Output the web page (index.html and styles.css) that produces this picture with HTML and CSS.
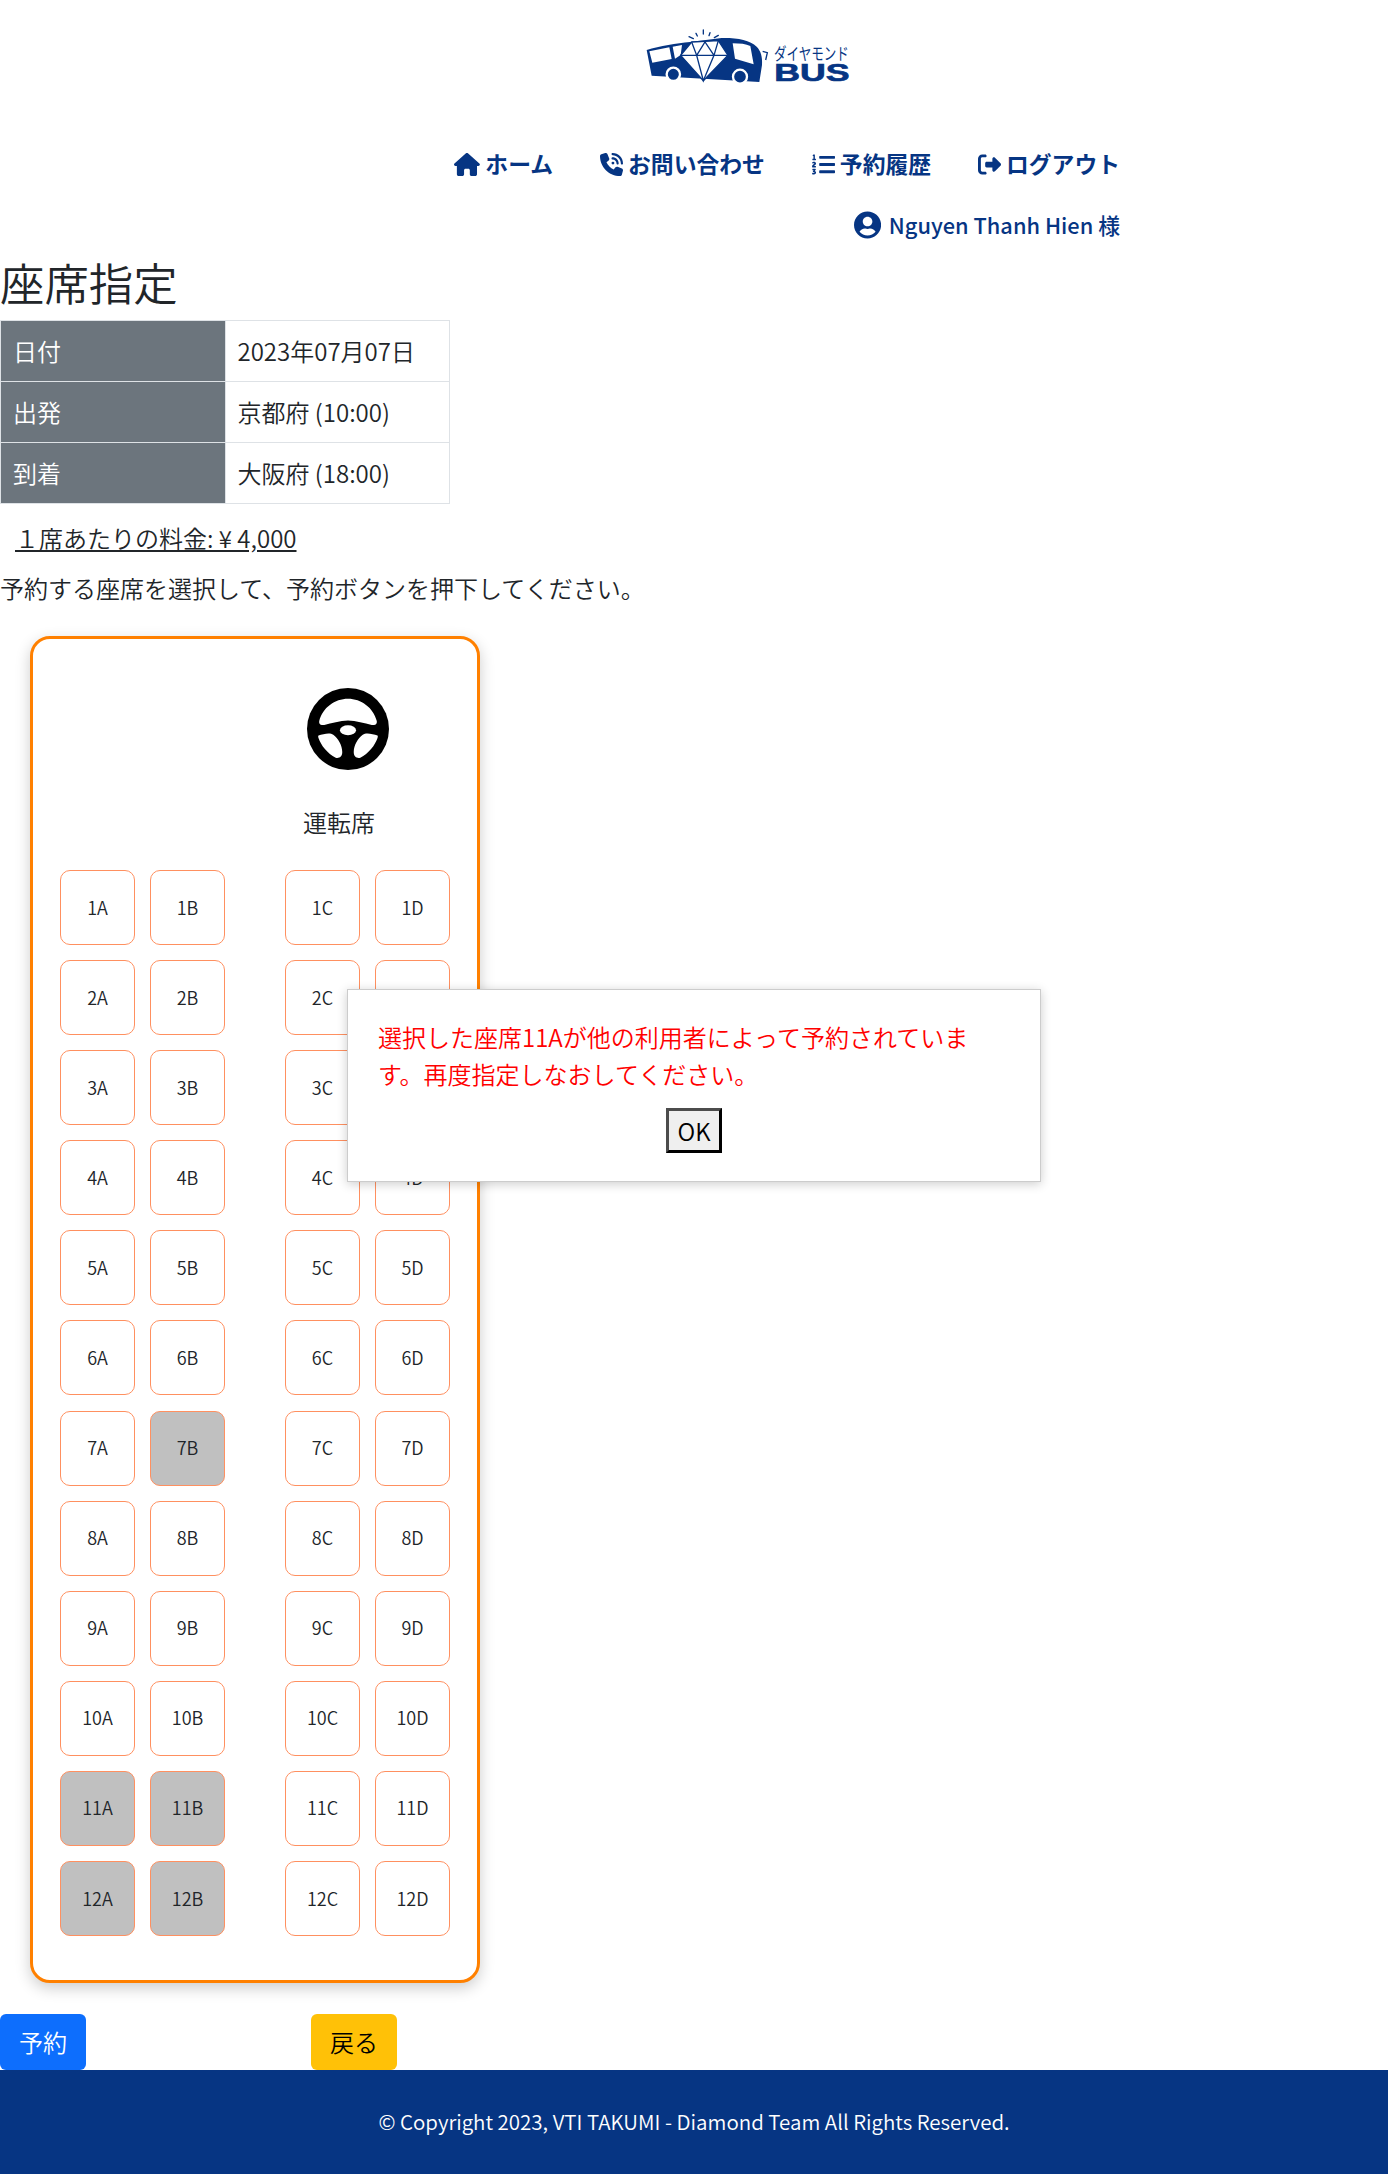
FILE: index.html
```html
<!DOCTYPE html>
<html lang="ja">
<head>
  <meta charset="UTF-8" />
  <meta name="viewport" content="width=device-width, initial-scale=1.0"/>
  <title>座席指定</title>
  <link rel="stylesheet" href="styles.css">
</head>
<body>
  <header class="site-header">
    <a class="logo" href="#">
      <svg width="220" height="80" viewBox="0 0 660 240">
        <g stroke="#063583" stroke-width="4" stroke-linecap="round">
          <path d="M147 50L160 56M168 40L172 48M190 30V42M210 38L207 47M235 46L223 53"/>
        </g>
        <path fill="#063583" d="M20 90C60 78 110 70 150 66L245 54C290 53 330 60 350 80C362 92 368 110 366 135L358 186L320 184L35 167Z"/>
        <path fill="none" stroke="#063583" stroke-width="4" d="M368 94L382 98L377 120"/>
        <path fill="#fff" d="M28 94L88 82L95 117L37 128ZM98 80L126 75L122 105L105 116ZM278 70C300 70 318 72 331 78L341 133L285 116Z"/>
        <path fill="#fff" stroke="#063583" stroke-width="4" d="M155 66L235 62L264 106L190 182L122 106Z"/>
        <path fill="none" stroke="#063583" stroke-width="4" d="M122 106H264M155 66L170 106L190 182L222 106L235 62M170 106L195 66L222 106"/>
        <g fill="#063583" stroke="#fff" stroke-width="7">
          <circle cx="100" cy="163" r="20"/>
          <circle cx="300" cy="170" r="21"/>
        </g>
        <text class="logo-kana" transform="translate(402 121) scale(1 1.35)">ダイヤモンド</text>
        <text class="logo-bus" x="403" y="184" textLength="226" lengthAdjust="spacingAndGlyphs">BUS</text>
      </svg>
    </a>
    <nav class="nav">
      <a href="#">
        <svg class="icon" viewBox="0 0 576 512"><path d="M575.8 255.5c0 18-15 32.1-32 32.1h-32l.7 160.2c0 2.7-.2 5.4-.5 8.1V472c0 22.1-17.9 40-40 40H456c-1.1 0-2.2 0-3.3-.1c-1.4 .1-2.8 .1-4.2 .1H416 392c-22.1 0-40-17.9-40-40V448 384c0-17.7-14.3-32-32-32H256c-17.7 0-32 14.3-32 32v64 24c0 22.1-17.9 40-40 40H160 128.1c-1.5 0-3-.1-4.5-.2c-1.2 .1-2.4 .2-3.6 .2H104c-22.1 0-40-17.9-40-40V360c0-.9 0-1.9 .1-2.8V287.6H32c-18 0-32-14-32-32.1c0-9 3-17 10-24L266.4 8c7-7 15-8 22-8s15 2 21 7L564.8 231.5c8 7 12 15 11 24z"/></svg>ホーム
      </a>
      <a href="#">
        <svg class="icon" viewBox="0 0 512 512"><path d="M280 0C408.1 0 512 103.9 512 232c0 13.3-10.7 24-24 24s-24-10.7-24-24c0-101.6-82.4-184-184-184c-13.3 0-24-10.7-24-24s10.7-24 24-24zm8 192a32 32 0 1 1 0 64 32 32 0 1 1 0-64zm-32-72c0-13.3 10.7-24 24-24c75.1 0 136 60.9 136 136c0 13.3-10.7 24-24 24s-24-10.7-24-24c0-48.6-39.4-88-88-88c-13.3 0-24-10.7-24-24zM117.5 1.4c19.4-5.3 39.7 4.6 47.4 23.2l40 96c6.8 16.3 2.1 35.2-11.6 46.3L144 207.3c33.3 70.4 90.3 127.4 160.7 160.7L345 318.7c11.2-13.7 30-18.4 46.3-11.6l96 40c18.6 7.7 28.5 28 23.2 47.4l-24 88C481.8 499.9 466 512 448 512C200.6 512 0 311.4 0 64C0 46 12.1 30.2 29.5 25.4l88-24z"/></svg>お問い合わせ
      </a>
      <a href="#">
        <svg class="icon" viewBox="0 0 512 512"><path d="M61.77 401l17.5-20.15a19.92 19.92 0 0 0 5.07-14.19v-3.31C84.34 356 80.5 352 73 352H16a8 8 0 0 0-8 8v16a8 8 0 0 0 8 8h22.83a157.41 157.41 0 0 0-11 12.31l-5.61 7c-4 5.07-5.25 10.13-2.8 14.88l1.05 1.93c3 5.76 6.29 7.88 12.25 7.88h4.73c10.33 0 15.94 2.44 15.94 9.09 0 4.72-4.2 8.22-14.36 8.22a41.54 41.54 0 0 1-15.47-3.12c-6.49-3.88-11.74-3.5-15.6 3.12l-5.59 9.31c-3.72 6.13-3.19 11.72 2.63 15.94 7.71 4.69 20.38 9.44 37 9.44 34.16 0 48.5-22.75 48.5-44.12-.03-14.38-9.12-29.76-28.73-34.88zM496 224H176a16 16 0 0 0-16 16v32a16 16 0 0 0 16 16h320a16 16 0 0 0 16-16v-32a16 16 0 0 0-16-16zm0-160H176a16 16 0 0 0-16 16v32a16 16 0 0 0 16 16h320a16 16 0 0 0 16-16V80a16 16 0 0 0-16-16zm0 320H176a16 16 0 0 0-16 16v32a16 16 0 0 0 16 16h320a16 16 0 0 0 16-16v-32a16 16 0 0 0-16-16zM16 160h64a8 8 0 0 0 8-8v-16a8 8 0 0 0-8-8H64V40a8 8 0 0 0-8-8H32a8 8 0 0 0-7.14 4.42l-8 16A8 8 0 0 0 24 64h8v64H16a8 8 0 0 0-8 8v16a8 8 0 0 0 8 8zm-3.91 160H80a8 8 0 0 0 8-8v-16a8 8 0 0 0-8-8H41.32c3.29-10.29 48.34-18.68 48.34-56.44 0-29.06-25-39.56-44.47-39.56-21.36 0-33.8 10-40.46 18.75-4.37 5.59-3 10.84 2.8 15.37l8.58 6.88c5.61 4.56 11 2.47 16.12-2.44a13.44 13.44 0 0 1 9.46-3.84c3.33 0 9.28 1.56 9.28 8.75C51 248.19 0 257.31 0 304.59v4C0 316 5.08 320 12.09 320z"/></svg>予約履歴
      </a>
      <a href="#">
        <svg class="icon" viewBox="0 0 512 512"><path d="M377.9 105.9L500.7 228.7c7.2 7.2 11.3 17.1 11.3 27.3s-4.1 20.1-11.3 27.3L377.9 406.1c-6.4 6.4-15 9.9-24.1 9.9c-18.7 0-33.9-15.2-33.9-33.9l0-62.1-128 0c-17.7 0-32-14.3-32-32l0-64c0-17.7 14.3-32 32-32l128 0 0-62.1c0-18.7 15.2-33.9 33.9-33.9c9 0 17.6 3.6 24.1 9.9zM160 96L96 96c-17.7 0-32 14.3-32 32l0 256c0 17.7 14.3 32 32 32l64 0c17.7 0 32 14.3 32 32s-14.3 32-32 32l-64 0c-53 0-96-43-96-96L0 128C0 75 43 32 96 32l64 0c17.7 0 32 14.3 32 32s-14.3 32-32 32z"/></svg>ログアウト
      </a>
    </nav>
    <div class="user">
      <svg class="icon icon-user" viewBox="0 0 496 512"><path d="M248 8C111 8 0 119 0 256s111 248 248 248 248-111 248-248S385 8 248 8zm0 96c48.6 0 88 39.4 88 88s-39.4 88-88 88-88-39.4-88-88 39.4-88 88-88zm0 344c-58.7 0-111.3-26.6-146.5-68.2 18.8-35.4 55.6-59.8 98.5-59.8 2.4 0 4.8.4 7.1 1.1 13 4.2 26.6 6.9 40.9 6.9 14.3 0 28-2.7 40.9-6.9 2.3-.7 4.7-1.1 7.1-1.1 42.9 0 79.7 24.4 98.5 59.8C359.3 421.4 306.7 448 248 448z"/></svg>Nguyen Thanh Hien 様
    </div>
  </header>

  <main>
    <h2>座席指定</h2>
    <table class="trip">
      <tr><th>日付</th><td>2023年07月07日</td></tr>
      <tr><th>出発</th><td>京都府 (10:00)</td></tr>
      <tr><th>到着</th><td>大阪府 (18:00)</td></tr>
    </table>
    <p class="price">１席あたりの料金: ¥ 4,000</p>
    <p class="hint">予約する座席を選択して、予約ボタンを押下してください。</p>

    <div class="bus">
      <svg class="wheel" viewBox="0 0 100 100">
        <circle cx="50" cy="50" r="50"/>
        <g fill="#fff">
          <path d="M15 40C19 24 34 13 50 13C66 13 81 24 85 40C86 44 83 46 79 45C70 43 60 39.5 50 39.5C40 39.5 30 43 21 45C17 46 14 44 15 40Z"/>
          <ellipse cx="50" cy="51.6" rx="9.8" ry="6.1"/>
          <path d="M14 58C20 56 28 54 32 57C38 61 43 70 43 78C43 84 39 86 35 85C25 80 17 70 14 61C13.5 59.5 13.5 58.5 14 58Z"/>
          <path d="M86 58C80 56 72 54 68 57C62 61 57 70 57 78C57 84 61 86 65 85C75 80 83 70 86 61C86.5 59.5 86.5 58.5 86 58Z"/>
        </g>
      </svg>
      <div class="driver">運転席</div>
      <div class="seats">
        <button class="seat">1A</button><button class="seat">1B</button><button class="seat col-c">1C</button><button class="seat">1D</button>
        <button class="seat">2A</button><button class="seat">2B</button><button class="seat col-c">2C</button><button class="seat">2D</button>
        <button class="seat">3A</button><button class="seat">3B</button><button class="seat col-c">3C</button><button class="seat">3D</button>
        <button class="seat">4A</button><button class="seat">4B</button><button class="seat col-c">4C</button><button class="seat">4D</button>
        <button class="seat">5A</button><button class="seat">5B</button><button class="seat col-c">5C</button><button class="seat">5D</button>
        <button class="seat">6A</button><button class="seat">6B</button><button class="seat col-c">6C</button><button class="seat">6D</button>
        <button class="seat">7A</button><button class="seat taken">7B</button><button class="seat col-c">7C</button><button class="seat">7D</button>
        <button class="seat">8A</button><button class="seat">8B</button><button class="seat col-c">8C</button><button class="seat">8D</button>
        <button class="seat">9A</button><button class="seat">9B</button><button class="seat col-c">9C</button><button class="seat">9D</button>
        <button class="seat">10A</button><button class="seat">10B</button><button class="seat col-c">10C</button><button class="seat">10D</button>
        <button class="seat taken">11A</button><button class="seat taken">11B</button><button class="seat col-c">11C</button><button class="seat">11D</button>
        <button class="seat taken">12A</button><button class="seat taken">12B</button><button class="seat col-c">12C</button><button class="seat">12D</button>
      </div>
    </div>

    <div class="actions">
      <button class="btn btn-primary">予約</button>
      <button class="btn btn-warning">戻る</button>
    </div>
  </main>

  <footer class="footer">© Copyright 2023, VTI TAKUMI - Diamond Team All Rights Reserved.</footer>

  <div class="alert-box">
    <p>選択した座席11Aが他の利用者によって予約されています。再度指定しなおしてください。</p>
    <button class="alert-ok">OK</button>
  </div>
</body>
</html>
```

FILE: styles.css
```css
* {
  box-sizing: border-box;
}
body {
  margin: 0;
  background: white;
  color: #212529;
  font-family: "Noto Sans CJK JP", "Open Sans", sans-serif;
  font-size: 24px;
  font-weight: 350;
  line-height: 34px;
  position: relative;
}
a {
  color: inherit;
  text-decoration: none;
}

/* header */
.site-header {
  color: #063583;
  font-size: 22.8px;
  font-weight: 700;
  padding-top: 20px;
  width: 1120px;
}
.logo {
  display: block;
  margin-left: 640px;
  width: 220px;
  height: 80px;
}
.logo-kana {
  font-family: "Noto Sans CJK JP", sans-serif;
  font-size: 37.6px;
  font-weight: 400;
  fill: #063583;
}
.logo-bus {
  font-family: "Liberation Sans", sans-serif;
  font-weight: bold;
  font-size: 73px;
  fill: #063583;
  stroke: #063583;
  stroke-width: 2px;
}
.nav {
  display: flex;
  justify-content: flex-end;
  gap: 47px;
  margin-top: 47px;
}
.nav a {
  display: flex;
  align-items: center;
  gap: 5px;
}
.icon {
  height: 23px;
  width: auto;
  fill: #063583;
}
.user {
  display: flex;
  justify-content: flex-end;
  align-items: center;
  gap: 8px;
  margin-top: 27px;
  font-size: 21.8px;
  font-weight: 500;
}
.icon-user {
  height: 28px;
}

/* trip info */
h2 {
  font-size: 44.4px;
  font-weight: 350;
  line-height: 53px;
  margin: 13px 0 12px;
}
.trip {
  width: 450px;
  border-collapse: collapse;
  table-layout: fixed;
}
.trip th, .trip td {
  height: 61px;
  padding: 0 12px 1px;
  border: 1px solid #dee2e6;
  text-align: left;
  font-weight: 350;
}
.trip th {
  background: #6c757d;
  color: white;
}
.price {
  margin: 17px 0 0;
  padding-left: 15px;
  text-decoration: underline;
}
.hint {
  margin: 16px 0 0;
}

/* seat map */
.bus {
  width: 450px;
  margin: 31px 0 0 30px;
  padding: 49px 27px 44px;
  background: white;
  border: 3px solid #ff8000;
  border-radius: 20px;
  box-shadow: 0 5px 15px rgba(0, 0, 0, .2);
}
.wheel {
  display: block;
  width: 82px;
  height: 82px;
  margin-left: 247px;
}
.driver {
  margin: 35px 0 31px 243px;
}
.seats {
  display: grid;
  grid-template-columns: 75px 75px 30px 75px 75px;
  grid-auto-rows: 75px;
  gap: 15.1px 15px;
}
.seat {
  padding: 0 0 2px;
  background: white;
  border: 1.4px solid #ff9060;
  border-radius: 10px;
  color: #212529;
  font-family: inherit;
  font-size: 18px;
  font-weight: 350;
}
.seat.taken {
  background: silver;
}
.col-c {
  grid-column: 4;
}

/* buttons and footer */
.actions {
  display: flex;
  gap: 225px;
  margin-top: 31px;
}
.btn {
  width: 86px;
  height: 56px;
  padding: 0 0 2px;
  border: none;
  border-radius: 6px;
  font-family: inherit;
  font-size: 24px;
  font-weight: 350;
}
.btn-primary {
  background: #0d6efd;
  color: white;
}
.btn-warning {
  background: #ffc107;
  color: black;
}
.footer {
  height: 104px;
  padding-bottom: 2px;
  display: flex;
  align-items: center;
  justify-content: center;
  background: #063583;
  color: white;
  font-size: 20.5px;
  font-weight: 350;
}

/* alert popup */
.alert-box {
  position: absolute;
  left: 347px;
  top: 989px;
  width: 694px;
  height: 193px;
  padding: 28px 30px;
  background: white;
  border: 1px solid #ccc;
  box-shadow: 0 2px 10px rgba(0, 0, 0, .2);
  text-align: center;
}
.alert-box p {
  margin: 0 0 16px;
  color: red;
  line-height: 37px;
  text-align: left;
}
.alert-ok {
  width: 56px;
  height: 45px;
  padding: 0;
  background: #efefef;
  border: 3px solid;
  border-color: #4c4c4c #000 #000 #4c4c4c;
  color: black;
  font-family: inherit;
  font-size: 24px;
  font-weight: 350;
}
```
